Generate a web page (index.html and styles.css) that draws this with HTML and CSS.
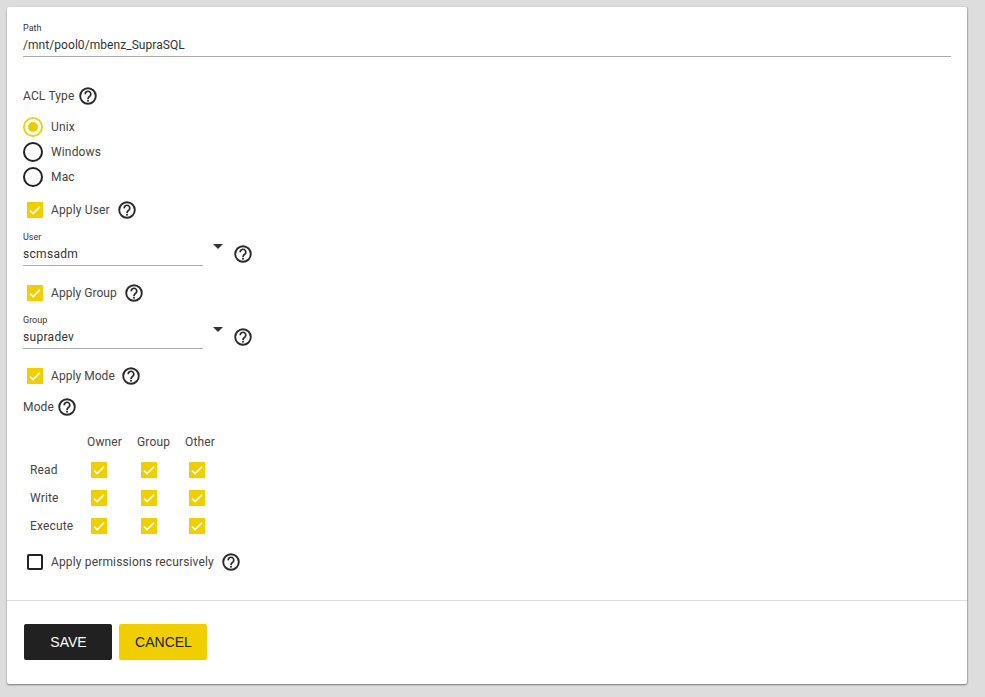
FILE: index.html
```html
<!DOCTYPE html>
<html lang="en">
<head>
<meta charset="utf-8">
<title>Edit Permissions</title>
<link rel="stylesheet" href="styles.css">
</head>
<body>
<svg class="defs" width="0" height="0" aria-hidden="true">
  <symbol id="help" viewBox="0 0 18 18">
    <circle cx="9" cy="9" r="7.8" fill="none" stroke="#2a2a2a" stroke-width="1.9"/>
    <path d="M6.2 7.2a2.8 2.8 0 1 1 4.5 2.1c-1 .8-1.7 1.2-1.7 2.6" fill="none" stroke="#2a2a2a" stroke-width="1.7"/>
    <rect x="8.1" y="12.8" width="1.8" height="1.8" fill="#2a2a2a"/>
  </symbol>
  <symbol id="tick" viewBox="0 0 16 16">
    <path d="M3 8.6l3.2 3L13 4.6" fill="none" stroke="#fff" stroke-width="1.6"/>
  </symbol>
</svg>
<main class="card">
  <form class="form">
    <div class="field path-field">
      <span class="float-label">Path</span>
      <span class="value path-value">/mnt/pool0/mbenz_SupraSQL</span>
    </div>

    <div class="heading acl-heading">
      <span>ACL Type</span>
      <svg class="help"><use href="#help"/></svg>
    </div>

    <div class="radios">
      <div class="radio-row"><span class="radio radio-on"></span><span>Unix</span></div>
      <div class="radio-row"><span class="radio"></span><span>Windows</span></div>
      <div class="radio-row"><span class="radio"></span><span>Mac</span></div>
    </div>

    <div class="check-row">
      <span class="box box-on"><svg class="tick"><use href="#tick"/></svg></span>
      <span>Apply User</span>
      <svg class="help"><use href="#help"/></svg>
    </div>

    <div class="select-row">
      <div class="field select-field">
        <span class="float-label">User</span>
        <span class="value">scmsadm</span>
      </div>
      <span class="caret"></span>
      <svg class="help select-help"><use href="#help"/></svg>
    </div>

    <div class="check-row tight">
      <span class="box box-on"><svg class="tick"><use href="#tick"/></svg></span>
      <span>Apply Group</span>
      <svg class="help"><use href="#help"/></svg>
    </div>

    <div class="select-row">
      <div class="field select-field">
        <span class="float-label">Group</span>
        <span class="value">supradev</span>
      </div>
      <span class="caret"></span>
      <svg class="help select-help"><use href="#help"/></svg>
    </div>

    <div class="check-row tight mode-check">
      <span class="box box-on"><svg class="tick"><use href="#tick"/></svg></span>
      <span>Apply Mode</span>
      <svg class="help"><use href="#help"/></svg>
    </div>

    <div class="heading mode-heading">
      <span>Mode</span>
      <svg class="help"><use href="#help"/></svg>
    </div>

    <div class="mode-grid">
      <span></span><span class="col-head">Owner</span><span class="col-head">Group</span><span class="col-head">Other</span>
      <span class="row-head">Read</span>
      <span class="box box-on"><svg class="tick"><use href="#tick"/></svg></span>
      <span class="box box-on"><svg class="tick"><use href="#tick"/></svg></span>
      <span class="box box-on"><svg class="tick"><use href="#tick"/></svg></span>
      <span class="row-head">Write</span>
      <span class="box box-on"><svg class="tick"><use href="#tick"/></svg></span>
      <span class="box box-on"><svg class="tick"><use href="#tick"/></svg></span>
      <span class="box box-on"><svg class="tick"><use href="#tick"/></svg></span>
      <span class="row-head">Execute</span>
      <span class="box box-on"><svg class="tick"><use href="#tick"/></svg></span>
      <span class="box box-on"><svg class="tick"><use href="#tick"/></svg></span>
      <span class="box box-on"><svg class="tick"><use href="#tick"/></svg></span>
    </div>

    <div class="check-row recursive-row">
      <span class="box"></span>
      <span>Apply permissions recursively</span>
      <svg class="help"><use href="#help"/></svg>
    </div>
  </form>
  <footer class="actions">
    <button class="btn btn-save" type="button">SAVE</button>
    <button class="btn btn-cancel" type="button">CANCEL</button>
  </footer>
</main>
</body>
</html>
```
FILE: styles.css
```css
* { box-sizing: border-box; }
html, body { margin: 0; height: 100%; }
body {
  background: #ddd;
  padding: 7px 18px 13px 7px;
  font-family: Roboto, "Liberation Sans", sans-serif;
  font-size: 12px;
  letter-spacing: .15px;
  color: #444;
  overflow: hidden;
}
.defs { position: absolute; }
.card {
  width: 960px;
  height: 677px;
  background: #fff;
  border-radius: 2px;
  box-shadow: 0 1px 2px rgba(0,0,0,.45), 1px 0 1px rgba(0,0,0,.12);
  display: flex;
  flex-direction: column;
}
.form {
  height: 594px;
  padding: 16px 16px 0;
  border-bottom: 1px solid #ddd;
}
.field { display: flex; flex-direction: column; border-bottom: 1px solid #aaa; }
.float-label { font-size: 9px; line-height: 10px; letter-spacing: 0; color: #333; }
.value { font-size: 12px; line-height: 25px; height: 23px; letter-spacing: .3px; color: #333; }
.path-value { letter-spacing: .06px; }
.path-field { height: 34px; width: 928px; }
.heading { display: flex; align-items: center; gap: 4px; height: 18px; }
.acl-heading { margin-top: 30px; }
.help { width: 18px; height: 18px; flex: none; }
.radios { margin-top: 9px; padding-bottom: 5px; }
.radio-row { display: flex; align-items: center; gap: 8px; height: 25px; }
.radio { width: 20px; height: 20px; border: 2px solid #222; border-radius: 50%; flex: none; display: flex; align-items: center; justify-content: center; }
.radio-on { border-color: #e8d21d; }
.radio-on::after { content: ""; width: 10px; height: 10px; border-radius: 50%; background: #eccb00; }
.check-row { display: flex; align-items: center; height: 18px; padding-left: 4px; margin-top: 7px; }
.check-row > span:nth-child(2) { margin-left: 8px; margin-right: 8px; }
.tight { letter-spacing: .05px; }
.mode-check > span:nth-child(2) { margin-right: 7px; }
.box { width: 16px; height: 16px; flex: none; border: 2px solid #222; border-radius: 2px; display: block; }
.box-on { border: 0; border-radius: 0; background: #f0ce00; }
.tick { width: 16px; height: 16px; display: block; }
.select-row { display: flex; align-items: flex-start; margin-top: 13px; height: 45px; }
.select-field { width: 180px; height: 34px; }
.caret { width: 0; height: 0; margin: 12px 0 0 10px; border-left: 5px solid transparent; border-right: 5px solid transparent; border-top: 5px solid #333; }
.select-help { margin: 13px 0 0 11px; }
.mode-heading { margin-top: 13px; }
.mode-grid {
  display: grid;
  grid-template-columns: 64px 50px 48px 48px;
  grid-template-rows: 28px 28px 28px 28px;
  margin-top: 12px;
  align-items: center;
  justify-items: start;
}
.row-head { padding-left: 7px; }
.mode-grid .box { margin-left: 4px; }
.recursive-row { margin-top: 13px; }
.actions { display: flex; gap: 7px; padding: 23px 17px; }
.btn { width: 88px; height: 36px; border: 0; border-radius: 2px; font-family: "Liberation Sans", Arial, sans-serif; font-size: 14px; letter-spacing: 0; padding: 0 0 0 1px; }
.btn-save { background: #212121; color: #fff; }
.btn-cancel { background: #f0ce00; color: #222; }
```
